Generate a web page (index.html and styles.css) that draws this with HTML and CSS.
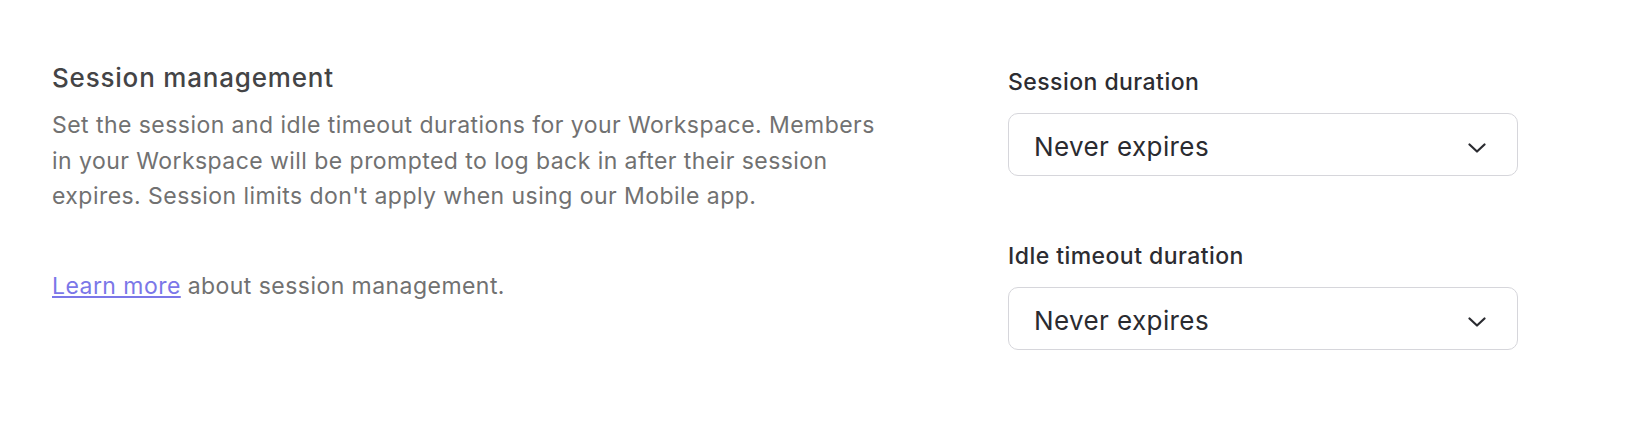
FILE: index.html
```html
<!DOCTYPE html>
<html lang="en">
<head>
    <meta charset="UTF-8">
    <meta name="viewport" content="width=device-width, initial-scale=1.0">
    <title>Session management</title>
    <link rel="stylesheet" href="styles.css">
</head>
<body>
    <section class="settings-row">
        <div class="settings-info">
            <h2>Session management</h2>
            <p class="description">Set the session and idle timeout durations for your Workspace. Members in your Workspace will be prompted to log back in after their session expires. Session limits don't apply when using our Mobile app.</p>
            <p class="learn"><a href="#">Learn more</a> about session management.</p>
        </div>

        <div class="settings-fields">
            <div class="field">
                <label>Session duration</label>
                <div class="select">
                    <span>Never expires</span>
                    <svg width="18" height="10" viewBox="0 0 18 10"><path d="M1.5 1.5 L9 8.5 L16.5 1.5" fill="none" stroke="#2a2b30" stroke-width="2.2" stroke-linecap="round" stroke-linejoin="round"/></svg>
                </div>
            </div>
            <div class="field">
                <label>Idle timeout duration</label>
                <div class="select">
                    <span>Never expires</span>
                    <svg width="18" height="10" viewBox="0 0 18 10"><path d="M1.5 1.5 L9 8.5 L16.5 1.5" fill="none" stroke="#2a2b30" stroke-width="2.2" stroke-linecap="round" stroke-linejoin="round"/></svg>
                </div>
            </div>
        </div>
    </section>
</body>
</html>
```

FILE: styles.css
```css
body {
    margin: 0;
    font-family: Inter, "Noto Sans", sans-serif;
    background: #fff;
}
.settings-row {
    display: flex;
    padding: 62px 0 0 52px;
}
.settings-info {
    flex: none;
    width: 835px;
}
.settings-info h2 {
    margin: 0;
    font-size: 26px;
    font-weight: 500;
    line-height: 32px;
    letter-spacing: 0.8px;
    color: #444446;
}
.description {
    margin: 14px 0 0;
    font-size: 23px;
    line-height: 35.5px;
    letter-spacing: 0.45px;
    color: #717171;
}
.learn {
    margin: 54px 0 0;
    font-size: 23px;
    line-height: 35.5px;
    letter-spacing: 0.45px;
    color: #717171;
}
.learn a {
    color: #7b77e8;
}
.settings-fields {
    flex: none;
    margin-left: 121px;
    padding-top: 6px;
    width: 510px;
}
.field {
    display: flex;
    flex-direction: column;
    margin-bottom: 66px;
}
.field label {
    font-size: 23px;
    font-weight: 500;
    line-height: 28px;
    letter-spacing: 0.45px;
    color: #2c2c31;
    margin-bottom: 17px;
}
.select {
    display: flex;
    align-items: center;
    justify-content: space-between;
    height: 63px;
    box-sizing: border-box;
    padding: 4px 31px 0 25px;
    border: 1.5px solid #d6d6db;
    border-radius: 10px;
    font-size: 26px;
    letter-spacing: 0.4px;
    color: #2a2b30;
}
.select svg {
    margin-top: 2px;
}
```
